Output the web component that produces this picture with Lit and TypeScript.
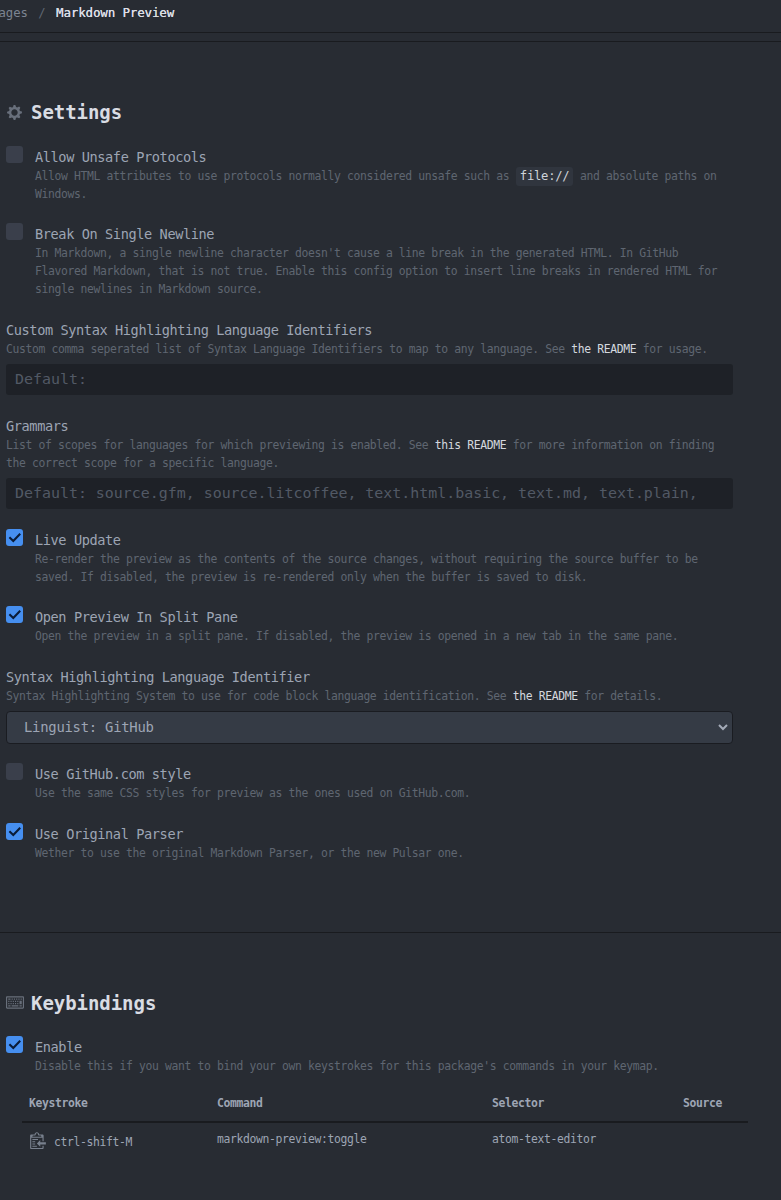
import { LitElement, html, css, svg, nothing } from "lit";
import type { TemplateResult } from "lit";
import { customElement, property } from "lit/decorators.js";
import { classMap } from "lit/directives/class-map.js";

const GEAR = svg`<path d="M14 8.77v-1.6l-1.94-.64-.45-1.09.88-1.84-1.13-1.13-1.81.91-1.09-.45-.69-1.92h-1.6l-.63 1.94-1.11.45-1.84-.88-1.13 1.13.91 1.81-.45 1.09L0 7.23v1.59l1.94.64.45 1.09-.88 1.84 1.13 1.13 1.81-.91 1.09.45.69 1.92h1.59l.63-1.94 1.11-.45 1.84.88 1.13-1.13-.92-1.81.47-1.09L14 8.75v.02zM7 11c-1.66 0-3-1.34-3-3s1.34-3 3-3 3 1.34 3 3-1.34 3-3 3z"/>`;
const KEYBOARD = svg`<path d="M10 5H9V4h1v1zM3 6H2v1h1V6zm5-2H7v1h1V4zM4 4H2v1h2V4zm8 7h2v-1h-2v1zM8 7h1V6H8v1zm-4 3H2v1h2v-1zm8-6h-1v1h1V4zm2 0h-1v1h1V4zm-2 5h2V6h-2v3zm4-6v9c0 .55-.45 1-1 1H1c-.55 0-1-.45-1-1V3c0-.55.45-1 1-1h14c.55 0 1 .45 1 1zm-1 0H1v9h14V3zM6 7h1V6H6v1zm0-3H5v1h1V4zM4 7h1V6H4v1zm1 4h6v-1H5v1zm5-4h1V6h-1v1zM3 8H2v1h1V8zm5 0v1h1V8H8zM6 8v1h1V8H6zM5 8H4v1h1V8zm5 1h1V8h-1v1z"/>`;
const CLIPPY = svg`<path d="M2 13h4v1H2v-1zm5-6H2v1h5V7zm2 3V8l-3 3 3 3v-2h5v-2H9zM4.5 9H2v1h2.5V9zM2 12h2.5v-1H2v1zm9 1h1v2c-.02.28-.11.52-.3.7-.19.18-.42.28-.7.3H1c-.55 0-1-.45-1-1V4c0-.55.45-1 1-1h3c0-1.11.89-2 2-2 1.11 0 2 .89 2 2h3c.55 0 1 .45 1 1v5h-1V6H1v9h10v-2zM2 5h8c0-.55-.45-1-1-1H8c-.55 0-1-.45-1-1s-.45-1-1-1-1 .45-1 1-.45 1-1 1H3c-.55 0-1 .45-1 1z"/>`;

@customElement("setting-toggle")
export class SettingToggle extends LitElement {
  @property() label = "";
  @property({ type: Boolean }) checked = false;

  static styles = css`
    :host { display: flex; align-items: flex-start; gap: 12px; }
    .box { flex: none; width: 17px; height: 17px; margin-top: -1px; border-radius: 3px; background: #3a3f4b; }
    .box.on { background: #468ff0; }
    .tick { display: block; width: 17px; height: 17px; fill: none; stroke: #0a1c38; stroke-width: 2.1; }
    .title { font-size: 13.6px; letter-spacing: -0.397px; line-height: 20px; color: #9da5b4; }
    .desc { font-size: 11.4px; letter-spacing: -0.36px; line-height: 18px; color: #5f6671; white-space: nowrap; }
  `;

  render() {
    return html`
      <div class=${classMap({ box: true, on: this.checked })}>
        ${this.checked ? html`<svg class="tick" viewBox="0 0 17 17"><path d="M3.4 8.2 7.3 12 14.2 4.8"/></svg>` : nothing}
      </div>
      <div>
        <div class="title">${this.label}</div>
        <div class="desc"><slot></slot></div>
      </div>`;
  }
}

@customElement("setting-field")
export class SettingField extends LitElement {
  @property() label = "";
  @property() value = "";
  @property() kind: "text" | "select" = "text";

  static styles = css`
    :host { display: block; }
    .title { font-size: 13.6px; letter-spacing: -0.397px; line-height: 20px; color: #9da5b4; }
    .desc { font-size: 11.4px; letter-spacing: -0.36px; line-height: 18px; color: #5f6671; white-space: nowrap; }
    .control { box-sizing: border-box; width: 727px; margin-top: 6px; display: flex; align-items: center; justify-content: space-between; white-space: pre; }
    .text { height: 31px; padding: 0 9px 2px; border-radius: 3px; background: #1e2127; color: #525965; font-size: 14.93px; }
    .select { height: 33px; padding: 0 4px 0 17px; border: 1px solid #1a1c21; border-radius: 4px; background: #353b45; color: #9da5b4; font-size: 13.9px; letter-spacing: -0.26px; }
    .select span { padding-bottom: 2px; }
    .chevron { width: 10px; height: 8px; margin-bottom: 1px; fill: none; stroke: #a4abb8; stroke-width: 2; }
  `;

  render() {
    return html`
      <div class="title">${this.label}</div>
      <div class="desc"><slot></slot></div>
      <div class=${classMap({ control: true, [this.kind]: true })}>
        <span>${this.value}</span>
        ${this.kind === "select" ? html`<svg class="chevron" viewBox="0 0 10 8"><path d="M1 2 5 6 9 2"/></svg>` : nothing}
      </div>`;
  }
}

@customElement("app-root")
export class AppRoot extends LitElement {
  static styles = css`
    :host { display: block; box-sizing: border-box; height: 1200px; overflow: hidden; background: #282c33; color: #9da5b4; font-family: "DejaVu Sans Mono", "Liberation Mono", monospace; }
    .crumbs { display: flex; box-sizing: border-box; height: 33px; overflow: hidden; border-bottom: 1px solid #191b1f; font-size: 12.25px; line-height: 26px; white-space: pre; }
    .parent { width: 28px; display: flex; justify-content: flex-end; color: #7c8491; }
    .slash { width: 28px; text-align: center; color: #5f6671; }
    .current { color: #dcdfe5; text-shadow: 0.3px 0 #dcdfe5; }
    .band { box-sizing: border-box; height: 9px; border-bottom: 1px solid #191b1f; }
    .settings { box-sizing: border-box; height: 891px; padding: 56px 0 0 6px; border-bottom: 1px solid #191b1f; }
    .keys { padding: 56px 0 0 6px; }
    .heading { display: flex; align-items: center; height: 28px; margin: 0; gap: 7px; color: #d9dce3; font-size: 19px; font-weight: 700; letter-spacing: -0.05px; }
    .head-icon { width: 18px; height: 18px; fill: #686f7b; }
    .gear { width: 17px; height: 17px; margin-right: 1px; fill: #686f7b; }
    .list { display: grid; grid-template-rows: 77px 96px 96px 114px 77px 60px 97px 60px 38px; margin-top: 21px; }
    .code { display: inline-block; height: 19px; line-height: 18px; margin-bottom: -1px; padding: 0 4px; border-radius: 3px; background: #30353e; color: #cfd3da; font-size: 12.2px; letter-spacing: -0.25px; vertical-align: top; }
    .link { color: #d4d8df; }
    .enable { margin-top: 20px; }
    .table { width: 726px; margin: 13px 0 0 16px; font-size: 11.4px; letter-spacing: -0.36px; }
    .row { display: grid; grid-template-columns: 188px 275px 191px 1fr; padding-left: 7px; box-sizing: border-box; }
    .head { height: 35px; line-height: 30px; border-bottom: 2px solid #191b1f; font-weight: 700; }
    .body { padding-top: 7px; line-height: 18px; }
    .stroke { display: flex; gap: 8px; align-items: flex-start; height: 23px; padding: 1px 0 0 1px; }
    .clippy { width: 16px; height: 18px; fill: #78808d; }
    .stroke-text { padding-top: 2px; }
  `;

  private icon(shape: TemplateResult | unknown, box: string, cls: string) {
    return html`<svg class=${cls} viewBox=${box}>${shape}</svg>`;
  }

  render() {
    return html`
      <nav class="crumbs"><span class="parent">Packages</span><span class="slash">/</span><span class="current">Markdown Preview</span></nav>
      <div class="band"></div>
      <section class="settings">
        <h2 class="heading">${this.icon(GEAR, "-1 0 16 16", "gear")}Settings</h2>
        <div class="list">
          <setting-toggle label="Allow Unsafe Protocols">Allow HTML attributes to use protocols normally considered unsafe such as <span class="code">file://</span> and absolute paths on<br>Windows.</setting-toggle>
          <setting-toggle label="Break On Single Newline">In Markdown, a single newline character doesn't cause a line break in the generated HTML. In GitHub<br>Flavored Markdown, that is not true. Enable this config option to insert line breaks in rendered HTML for<br>single newlines in Markdown source.</setting-toggle>
          <setting-field label="Custom Syntax Highlighting Language Identifiers" value="Default: ">Custom comma seperated list of Syntax Language Identifiers to map to any language. See <span class="link">the README</span> for usage.</setting-field>
          <setting-field label="Grammars" value="Default: source.gfm, source.litcoffee, text.html.basic, text.md, text.plain,">List of scopes for languages for which previewing is enabled. See <span class="link">this README</span> for more information on finding<br>the correct scope for a specific language.</setting-field>
          <setting-toggle label="Live Update" checked>Re-render the preview as the contents of the source changes, without requiring the source buffer to be<br>saved. If disabled, the preview is re-rendered only when the buffer is saved to disk.</setting-toggle>
          <setting-toggle label="Open Preview In Split Pane" checked>Open the preview in a split pane. If disabled, the preview is opened in a new tab in the same pane.</setting-toggle>
          <setting-field kind="select" label="Syntax Highlighting Language Identifier" value="Linguist: GitHub">Syntax Highlighting System to use for code block language identification. See <span class="link">the README</span> for details.</setting-field>
          <setting-toggle label="Use GitHub.com style">Use the same CSS styles for preview as the ones used on GitHub.com.</setting-toggle>
          <setting-toggle label="Use Original Parser" checked>Wether to use the original Markdown Parser, or the new Pulsar one.</setting-toggle>
        </div>
      </section>
      <section class="keys">
        <h2 class="heading">${this.icon(KEYBOARD, "0 0 16 16", "head-icon")}Keybindings</h2>
        <setting-toggle class="enable" label="Enable" checked>Disable this if you want to bind your own keystrokes for this package's commands in your keymap.</setting-toggle>
        <div class="table">
          <div class="row head"><span>Keystroke</span><span>Command</span><span>Selector</span><span>Source</span></div>
          <div class="row body">
            <span class="stroke">${this.icon(CLIPPY, "0 0 14 16", "clippy")}<span class="stroke-text">ctrl-shift-M</span></span>
            <span>markdown-preview:toggle</span><span>atom-text-editor</span><span></span>
          </div>
        </div>
      </section>`;
  }
}
